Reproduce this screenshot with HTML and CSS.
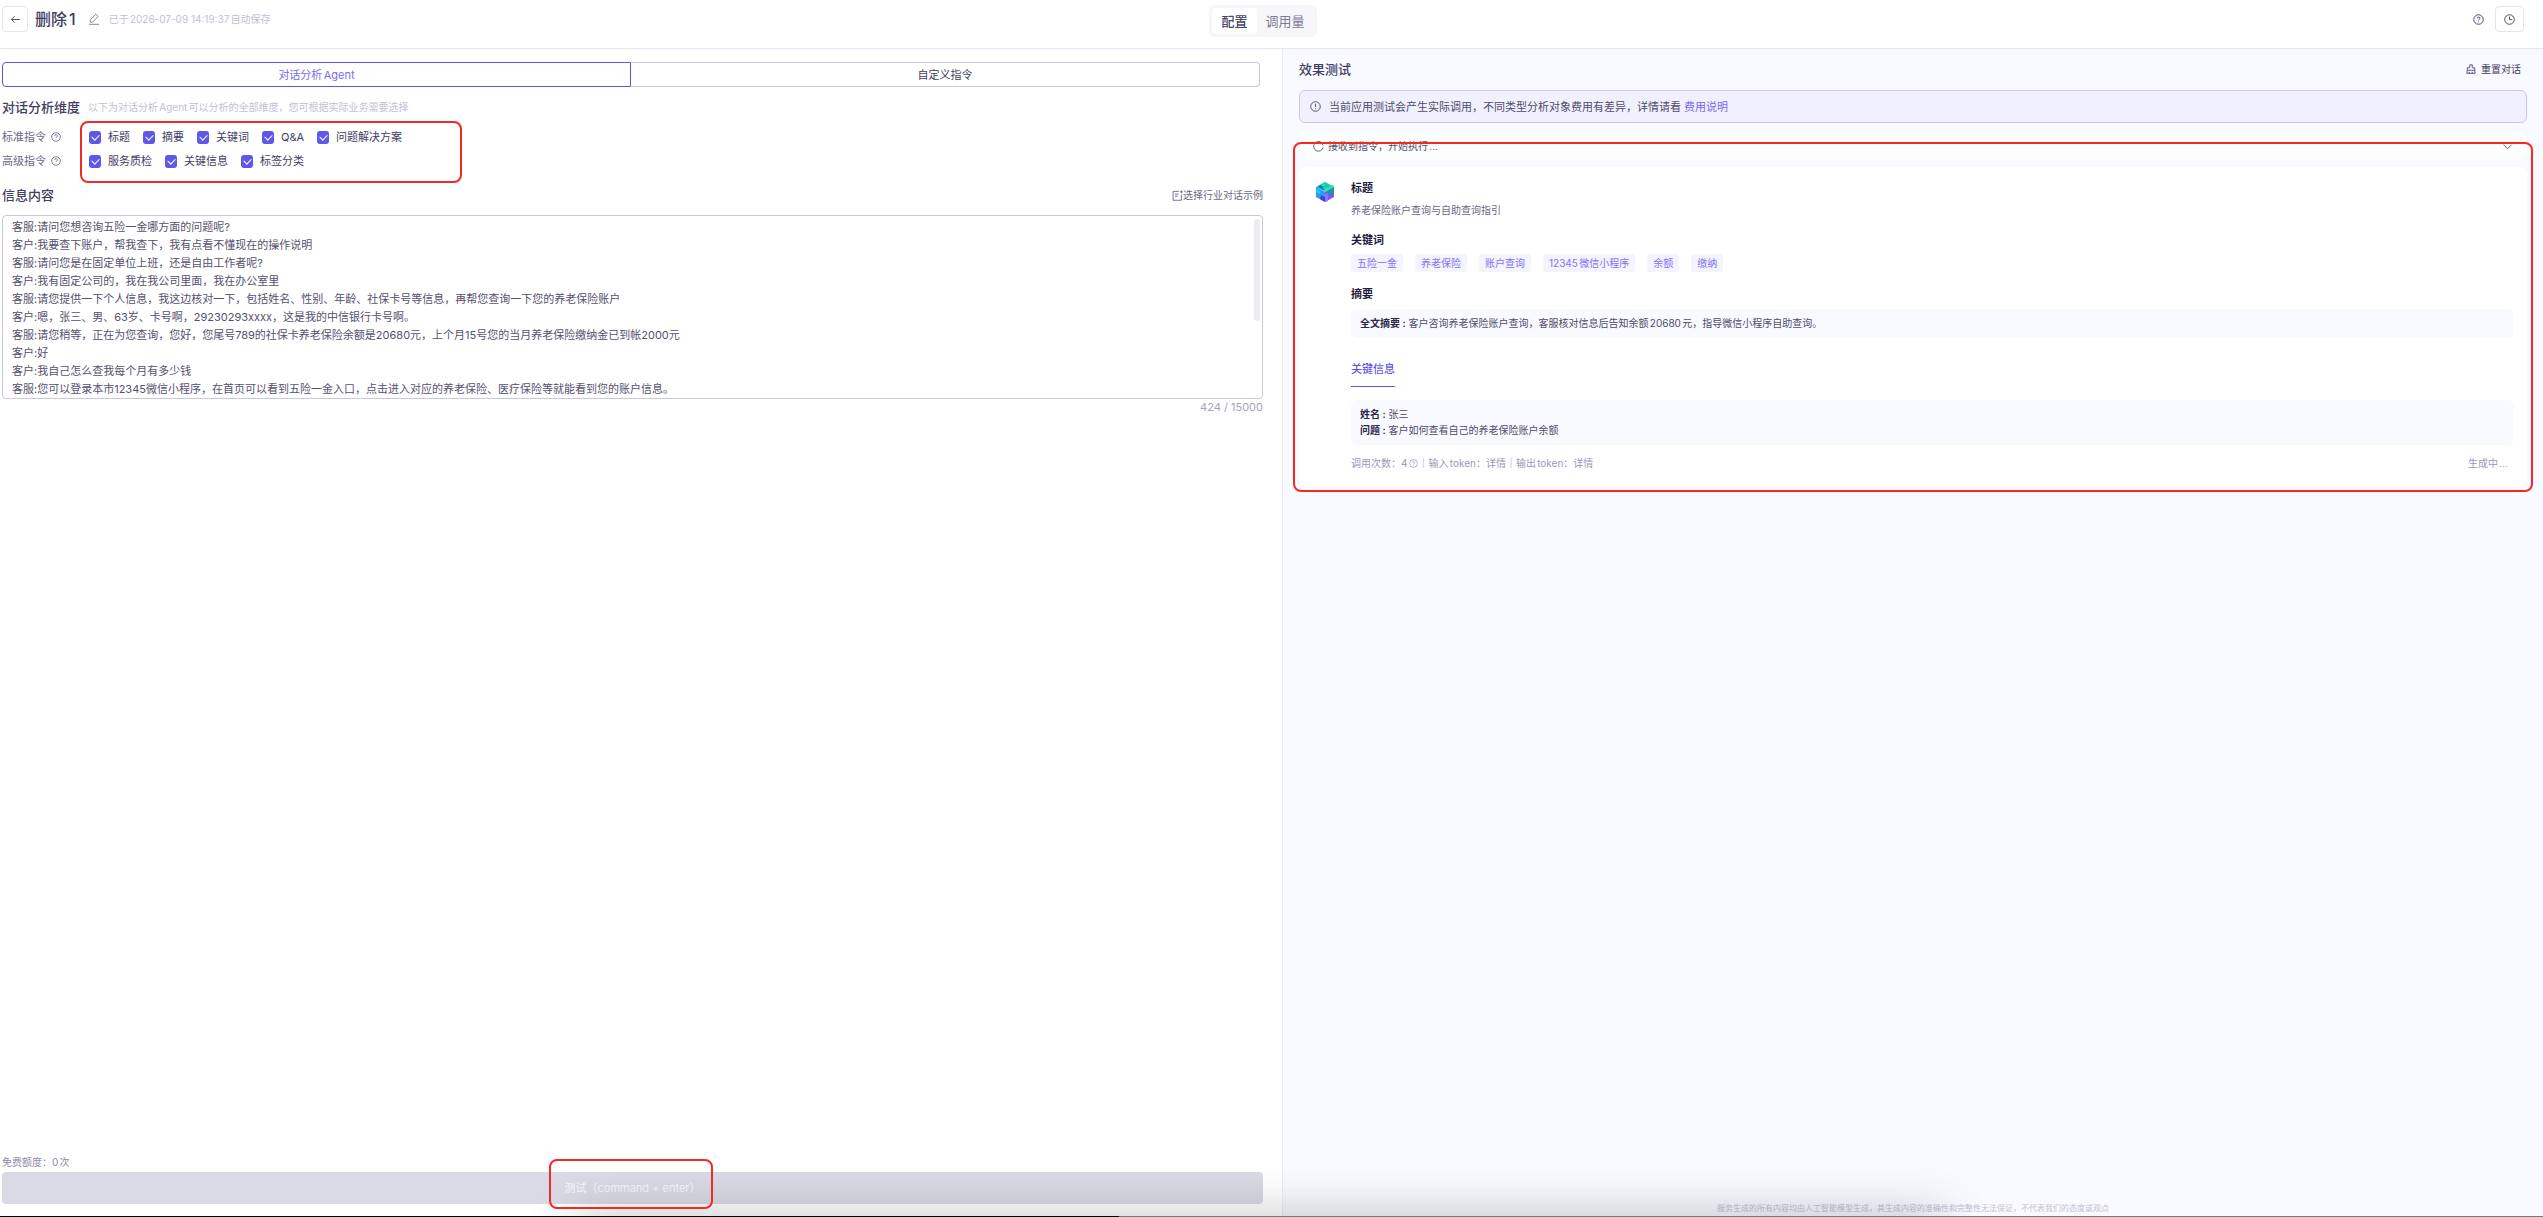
FILE: index.html
```html
<!DOCTYPE html>
<html lang="zh-CN">
<head>
  <meta charset="UTF-8">
  <meta name="viewport" content="width=device-width, initial-scale=1.0">
  <title>对话分析 Agent</title>
  <link rel="stylesheet" href="styles.css">
</head>
<body>
  <!-- Shared icons -->
  <svg class="sprite" aria-hidden="true">
    <symbol id="icon-help" viewBox="0 0 12 12">
      <circle cx="6" cy="6" r="5.2"/>
      <path d="M4.5 4.8a1.5 1.5 0 1 1 2.3 1.2c-.5.3-.8.5-.8 1.1M6 8.3v.8"/>
    </symbol>
  </svg>

  <header class="header">
    <div class="header-left">
      <button class="icon-btn" aria-label="返回">
        <svg class="icon" viewBox="0 0 12 12"><path d="M10.5 6h-9M5 2.5L1.5 6 5 9.5"/></svg>
      </button>
      <h1>删除1</h1>
      <button class="plain-btn edit-btn" aria-label="编辑名称">
        <svg class="icon" viewBox="0 0 12 12"><path d="M2.2 9.3V7L7.8 1.2l2.3 2.2L4.5 9.3z"/><path d="M1 11.3h10"/></svg>
      </button>
      <span class="saved">已于2026-07-09 14:19:37自动保存</span>
    </div>
    <nav class="switch">
      <button class="active">配置</button>
      <button>调用量</button>
    </nav>
    <div class="header-right">
      <button class="plain-btn" aria-label="帮助"><svg class="icon"><use href="#icon-help"/></svg></button>
      <button class="icon-btn history" aria-label="历史记录">
        <svg class="icon" viewBox="0 0 12 12"><circle cx="6" cy="6" r="5.2"/><path d="M6 2.8V6.2h3"/></svg>
      </button>
    </div>
  </header>

  <main class="main">
    <!-- Configuration -->
    <section class="config">
      <div class="tabs">
        <button class="active">对话分析Agent</button>
        <button>自定义指令</button>
      </div>

      <div class="section-head">
        <h2>对话分析维度</h2>
        <span class="hint">以下为对话分析Agent可以分析的全部维度，您可根据实际业务需要选择</span>
      </div>

      <div class="dimensions">
        <div class="dimension-labels">
          <span>标准指令 <svg class="icon"><use href="#icon-help"/></svg></span>
          <span>高级指令 <svg class="icon"><use href="#icon-help"/></svg></span>
        </div>
        <div class="dimension-options">
          <div class="option-row">
            <label><input type="checkbox" checked>标题</label>
            <label><input type="checkbox" checked>摘要</label>
            <label><input type="checkbox" checked>关键词</label>
            <label><input type="checkbox" checked>Q&amp;A</label>
            <label><input type="checkbox" checked>问题解决方案</label>
          </div>
          <div class="option-row">
            <label><input type="checkbox" checked>服务质检</label>
            <label><input type="checkbox" checked>关键信息</label>
            <label><input type="checkbox" checked>标签分类</label>
          </div>
        </div>
      </div>

      <div class="content-head">
        <h2><label for="content">信息内容</label></h2>
        <button class="plain-btn example-btn">
          <svg class="icon" viewBox="0 0 12 12"><path d="M7.5 1.5H1.2v9.7h9V5M3.2 4.4h4M3.2 6.8h3"/><path d="M10.3.4v3.2M8.7 2h3.2"/></svg>选择行业对话示例
        </button>
      </div>
      <div class="content-box">
        <textarea id="content" class="content">客服:请问您想咨询五险一金哪方面的问题呢?
客户:我要查下账户，帮我查下，我有点看不懂现在的操作说明
客服:请问您是在固定单位上班，还是自由工作者呢?
客户:我有固定公司的，我在我公司里面，我在办公室里
客服:请您提供一下个人信息，我这边核对一下，包括姓名、性别、年龄、社保卡号等信息，再帮您查询一下您的养老保险账户
客户:嗯，张三、男、63岁、卡号啊，29230293xxxx，这是我的中信银行卡号啊。
客服:请您稍等，正在为您查询，您好，您尾号789的社保卡养老保险余额是20680元，上个月15号您的当月养老保险缴纳金已到帐2000元
客户:好
客户:我自己怎么查我每个月有多少钱
客服:您可以登录本市12345微信小程序，在首页可以看到五险一金入口，点击进入对应的养老保险、医疗保险等就能看到您的账户信息。</textarea>
        <span class="thumb"></span>
      </div>
      <p class="counter">424 / 15000</p>

      <div class="config-footer">
        <p>免费额度：0次</p>
        <button class="test-btn">测试（command + enter）<span class="mark"></span></button>
      </div>
    </section>

    <!-- Test result -->
    <section class="preview">
      <div class="preview-head">
        <h2>效果测试</h2>
        <button class="plain-btn reset-btn">
          <svg class="icon" viewBox="0 0 12 12"><path d="M4.5 4.5V1h3v3.5h3v3h-9v-3zM1.5 7.5L1 11.2h10l-.5-3.7M4 11V9.3M7.5 11V9.3"/></svg>重置对话
        </button>
      </div>

      <div class="notice">
        <svg class="icon" viewBox="0 0 12 12"><circle cx="6" cy="6" r="5.2"/><path d="M6 3v3.6M6 8v1"/></svg>
        <span>当前应用测试会产生实际调用，不同类型分析对象费用有差异，详情请看 <a href="#">费用说明</a></span>
      </div>

      <div class="result">
        <div class="status">
          <svg class="icon" viewBox="0 0 12 12"><path d="M9.7 2.3A5.2 5.2 0 1 0 11 7M6 .8a5.2 5.2 0 0 1 5 3.8"/></svg>
          <span>接收到指令，开始执行...</span>
          <button class="plain-btn" aria-label="展开"><svg class="icon" viewBox="0 0 12 12"><path d="M1.5 4L6 8.5 10.5 4"/></svg></button>
        </div>

        <article class="answer">
          <svg class="logo" viewBox="0 0 18 20">
            <path d="M9 0l9 5-9 5-9-5z" fill="#19c9a9"/>
            <path d="M0 5l9 5v10l-9-5z" fill="#2b9df0"/>
            <path d="M18 5l-9 5v10l9-5z" fill="#6a5cf5"/>
            <path d="M4 4l4-2 2 1-3 2 3 1 7-3 1 2-9 5-6-3z" fill="#25e2ac"/>
            <path d="M4 3l4 2-2 1 3 1-2 1-5-3z" fill="#0f78c8"/>
            <path d="M12 9l6-4v5l-3 2-3 1z" fill="#149a9c"/>
            <path d="M0 7l4 2v3l-4-2z" fill="#27c7ff"/>
            <path d="M5 13l4 2v5l-5-3z" fill="#4c3fd8"/>
            <path d="M9 12l3-1v8l-3 1z" fill="#8b74ff"/>
          </svg>
          <div class="answer-body">
            <h3>标题</h3>
            <p class="summary-title">养老保险账户查询与自助查询指引</p>

            <h3>关键词</h3>
            <ul class="tags">
              <li>五险一金</li>
              <li>养老保险</li>
              <li>账户查询</li>
              <li>12345微信小程序</li>
              <li>余额</li>
              <li>缴纳</li>
            </ul>

            <h3>摘要</h3>
            <div class="block">
              <p><b>全文摘要 :</b> 客户咨询养老保险账户查询，客服核对信息后告知余额20680元，指导微信小程序自助查询。</p>
            </div>

            <h3 class="info-tab">关键信息</h3>
            <div class="block">
              <p><b>姓名 :</b> 张三</p>
              <p><b>问题 :</b> 客户如何查看自己的养老保险账户余额</p>
            </div>

            <div class="usage">
              <span>调用次数：4 <svg class="icon"><use href="#icon-help"/></svg>｜输入token：详情｜输出token：详情</span>
              <span>生成中...</span>
            </div>
          </div>
        </article>
        <span class="mark"></span>
      </div>

      <p class="disclaimer">服务生成的所有内容均由人工智能模型生成，其生成内容的准确性和完整性无法保证，不代表我们的态度或观点</p>
    </section>
    <div class="dock-shadow"></div>
  </main>
  <div class="screen-edge"></div>
</body>
</html>
```
FILE: styles.css
```css
* {
  box-sizing: border-box;
}

body {
  display: flex;
  flex-direction: column;
  height: 100vh;
  margin: 0;
  overflow: hidden;
  background: #fff;
  color: #423e62;
  font-family: Inter, "Noto Sans CJK SC", sans-serif;
  font-size: 11px;
  line-height: 16px;
  text-autospace: normal;
}

h1, h2, h3, p, ul {
  margin: 0;
  padding: 0;
}

h2 {
  font-size: 13px;
  font-weight: 500;
  line-height: 20px;
}

button, input, textarea {
  font: inherit;
  color: inherit;
}

button {
  padding: 0;
  border: none;
  background: none;
  cursor: pointer;
}

.sprite {
  position: absolute;
  width: 0;
  height: 0;
}

.icon {
  flex: none;
  width: 11px;
  height: 11px;
  fill: none;
  stroke: currentColor;
  stroke-width: 1;
}

.plain-btn {
  display: flex;
  align-items: center;
  font-size: 10px;
}

/* Red highlight frame */
.mark {
  position: absolute;
  border: 2px solid #f32a24;
  border-radius: 8px;
  pointer-events: none;
}

/* Header */
.header {
  display: grid;
  grid-template-columns: 1fr auto 1fr;
  align-items: start;
  height: 49px;
  padding: 5px 19px 0 2px;
  border-bottom: 1px solid #e6e6ee;
}

.header-left, .header-right {
  display: flex;
  align-items: center;
  height: 28px;
}

.header-right {
  justify-content: flex-end;
  gap: 11px;
}

.icon-btn {
  display: flex;
  align-items: center;
  justify-content: center;
  width: 26px;
  height: 26px;
  border: 1px solid #e4e4ec;
  border-radius: 4px;
}

.history {
  width: 29px;
}

.header h1 {
  margin-left: 7px;
  font-size: 16px;
  font-weight: 500;
  line-height: 26px;
}

.edit-btn {
  margin: 0 9px 0 12px;
  color: #8985a8;
}

.edit-btn .icon {
  width: 12px;
  height: 12px;
}

.saved, .hint {
  color: #c3c1d4;
  font-size: 10px;
}

.switch {
  display: flex;
  height: 32px;
  padding: 3px;
  border-radius: 6px;
  background: #f7f7fa;
}

.switch button {
  padding: 0 9px;
  border-radius: 4px;
  color: #7e7a97;
  font-size: 13px;
}

.switch .active {
  background: #fff;
  color: #4a4668;
  font-weight: 500;
}

/* Panels */
.main {
  position: relative;
  display: grid;
  grid-template-columns: 1283fr 1260fr;
  flex: 1;
  min-height: 0;
  overflow: hidden;
}

.config, .preview {
  display: flex;
  flex-direction: column;
  min-width: 0;
}

.config {
  padding: 13px 19px 12px 2px;
  border-right: 1px solid #ececf3;
}

.tabs {
  display: grid;
  grid-template-columns: 1fr 1fr;
  height: 25px;
  margin-right: 3px;
}

.tabs button {
  border: 1px solid #c9c7dc;
  border-left: none;
  border-radius: 0 4px 4px 0;
}

.tabs .active {
  border: 1px solid #5f55e8;
  border-radius: 4px 0 0 4px;
  color: #776df0;
}

.section-head {
  display: flex;
  align-items: center;
  gap: 8px;
  margin-top: 10px;
}

.dimensions {
  display: flex;
  margin-top: 4px;
}

.dimension-labels {
  width: 78px;
  padding-top: 4px;
  color: #6b6787;
}

.dimension-labels span {
  display: flex;
  align-items: center;
  gap: 5px;
  height: 24px;
}

.dimension-labels .icon {
  width: 10px;
  height: 10px;
}

.dimension-options {
  padding: 2px 58px 8px 7px;
  border: 2px solid #f32a24;
  border-radius: 8px;
}

.option-row {
  display: flex;
  gap: 13px;
  height: 24px;
}

.option-row label {
  display: flex;
  align-items: center;
  gap: 7px;
}

.option-row input {
  appearance: none;
  position: relative;
  width: 12px;
  height: 13px;
  margin: 0;
  border-radius: 3px;
  background: #5f57ea;
}

.option-row input::after {
  content: "";
  position: absolute;
  top: 3px;
  left: 3px;
  width: 6px;
  height: 4px;
  border: solid #fff;
  border-width: 0 0 1px 1px;
  transform: rotate(-45deg);
}

.option-row input:not(:checked) {
  background: #d9d8e6;
}

.content-head {
  display: flex;
  align-items: center;
  justify-content: space-between;
  margin-top: 2px;
}

.example-btn {
  color: #6b6787;
}

.content-box {
  position: relative;
  margin-top: 10px;
}

.content {
  display: block;
  width: 100%;
  height: 184px;
  padding: 2px 9px 0;
  border: 1px solid #c9c7dc;
  border-radius: 4px;
  outline: none;
  color: #55516f;
  line-height: 18px;
  resize: none;
  text-autospace: no-autospace;
}

.thumb {
  position: absolute;
  top: 4px;
  right: 3px;
  width: 6px;
  height: 102px;
  border-radius: 3px;
  background: #ecebf1;
}

.counter {
  color: #a5a3b6;
  text-align: right;
}

.config-footer {
  margin-top: auto;
  color: #8e8aab;
  font-size: 10px;
}

.test-btn {
  position: relative;
  display: block;
  width: 100%;
  height: 32px;
  margin-top: 2px;
  border-radius: 4px;
  background: #dadae6;
  color: #f6f6fa;
  font-size: 11px;
}

.test-btn .mark {
  top: -13px;
  bottom: -5px;
  left: 50%;
  width: 164px;
  margin-left: -84px;
  z-index: 1;
}

/* Right panel */
.preview {
  padding: 10px 16px 0;
  background: #f9faff;
}

.preview-head {
  display: flex;
  align-items: center;
  justify-content: space-between;
  padding-right: 6px;
}

.reset-btn {
  gap: 5px;
}

.reset-btn .icon {
  width: 10px;
  height: 10px;
}

.notice {
  display: flex;
  align-items: center;
  gap: 8px;
  height: 33px;
  margin-top: 11px;
  padding: 0 10px;
  border: 1px solid #cdc3fb;
  border-radius: 6px;
  background: #f1f0fe;
  color: #4f4b6c;
}

.notice a {
  color: #746aef;
  text-decoration: none;
}

.result {
  position: relative;
  margin-top: 9px;
}

.result > .mark {
  inset: 10px -6px -5px;
}

.status {
  display: flex;
  align-items: center;
  gap: 4px;
  height: 28px;
  padding: 0 14px;
  border-radius: 8px;
  background: #fcfdff;
  color: #55516f;
  font-size: 10px;
}

.status .plain-btn {
  margin-left: auto;
}

.answer {
  display: flex;
  gap: 17px;
  margin-top: 7px;
  padding: 11px 13px 16px 17px;
  border-radius: 8px;
  background: #fff;
}

.logo {
  flex: none;
  width: 18px;
  height: 20px;
  margin-top: 4px;
}

.answer-body {
  flex: 1;
  min-width: 0;
  font-size: 10px;
}

.answer h3 {
  color: #1f1b40;
  font-size: 11px;
  font-weight: 600;
  line-height: 20px;
}

.summary-title {
  margin: 4px 0 12px;
  color: #6b6787;
}

.tags {
  display: flex;
  gap: 12px;
  margin: 4px 0 12px;
  list-style: none;
}

.tags li {
  padding: 1px 6px;
  border-radius: 3px;
  background: #f4f3fe;
  color: #8374f3;
}

.block {
  margin-top: 5px;
  padding: 6px 9px 7px;
  border-radius: 6px;
  background: #f9faff;
  color: #4f4b6c;
}

.block b {
  color: #2b2749;
  font-weight: 600;
}

.answer .info-tab {
  width: fit-content;
  margin: 21px 0 13px;
  padding-bottom: 7px;
  border-bottom: 1px solid #5f55e8;
  color: #5f55e8;
  font-weight: 500;
}

.usage {
  display: flex;
  justify-content: space-between;
  margin-top: 10px;
  padding-right: 6px;
  color: #9a97b6;
}

.usage span {
  display: flex;
  align-items: center;
}

.usage .icon {
  width: 9px;
  height: 9px;
  margin-left: 2px;
}

.disclaimer {
  margin-top: auto;
  color: #c3c1d4;
  font-size: 8px;
  text-align: center;
}

/* Dock shadow along the lower screen edge */
.dock-shadow {
  position: absolute;
  bottom: -22px;
  left: 23%;
  width: 53%;
  height: 10px;
  box-shadow: 0 0 50px 10px rgba(0, 0, 0, 0.3);
  pointer-events: none;
}

.screen-edge {
  height: 1px;
  background: linear-gradient(to right, #000 44%, #77787c 44%);
}
```
